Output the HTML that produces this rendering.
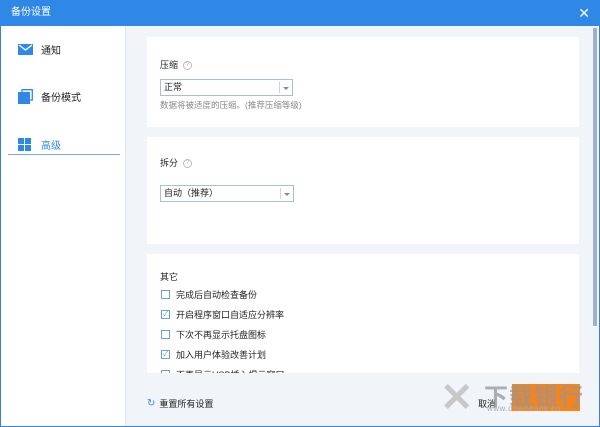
<!DOCTYPE html>
<html><head><meta charset="utf-8"><style>
*{margin:0;padding:0;box-sizing:border-box}
body{width:600px;height:427px;overflow:hidden;font-family:"Liberation Sans","Noto Sans CJK SC",sans-serif;font-size:9px;color:#222;background:#f1f4f9;position:relative}
.title{position:absolute;left:0;top:0;width:600px;height:26px;background:#2f87e6;color:#fff;font-size:10px;line-height:26px;padding-left:11px}
.close{position:absolute;right:10px;top:0;color:#fff;font-size:14px;line-height:26px}
.win{position:absolute;left:0;top:26px;width:600px;height:401px;border:1px solid #3a7fd0;border-top:none}
.side{position:absolute;left:1px;top:26px;width:125px;height:400px;background:#fff;border-right:1px solid #e1e6ee}
.item{position:absolute;left:17px;font-size:10px;display:flex;align-items:center}
.item span{margin-left:8px}
.card{position:absolute;left:147px;width:432px;background:#fff}
.lbl{position:absolute;left:13px;font-size:9px}
.q{display:inline-block;width:9px;height:9px;border:1px solid #bbb;border-radius:50%;font-size:6px;line-height:7px;text-align:center;color:#aaa;margin-left:5px;vertical-align:middle}
.sel{position:absolute;left:13px;width:133px;height:17px;border:1px solid #a9bedb;font-size:9px;line-height:15px;padding-left:3px}
.sel:after{content:"";position:absolute;right:0;top:2px;width:12px;height:11px;border-left:1px solid #c9d4e3}
.sel i{position:absolute;right:3px;top:7px;border:3px solid transparent;border-top:3px solid #889;border-bottom:none}
.cb{position:absolute;left:14px;font-size:9px;display:flex;align-items:center}
.cb b{width:9px;height:9px;border:1px solid #6f9fd8;margin-right:6px;font-size:7px;line-height:7px;color:#4a8ad8;font-weight:normal;text-align:center}
</style></head><body>
<div class="title">备份设置<span class="close">✕</span></div>
<div class="win"></div>
<div class="side">
 <div class="item" style="top:16px"><svg width="15" height="11"><rect width="15" height="11" fill="#2f87e6"/><path d="M1 1l6.5 5 6.5-5" stroke="#fff" stroke-width="1.4" fill="none"/></svg><span>通知</span></div>
 <div class="item" style="top:63px"><svg width="15" height="15"><path d="M4 3V0.7h10.3V11H12" fill="none" stroke="#2f87e6" stroke-width="1.3"/><rect x="0" y="3" width="12" height="12" fill="#2f87e6"/></svg><span style="margin-left:8px">备份模式</span></div>
 <div class="item" style="top:111px;color:#2f87e6"><svg width="13" height="13"><rect width="6" height="6" fill="#2f87e6"/><rect x="7" width="6" height="6" fill="#2f87e6"/><rect y="7" width="6" height="6" fill="#2f87e6"/><rect x="7" y="7" width="6" height="6" fill="#2f87e6"/></svg><span style="margin-left:10px">高级</span></div>
 <div style="position:absolute;left:7px;top:128px;width:112px;height:1px;background:#7aaee6"></div>
</div>
<div class="card" style="top:37px;height:90px">
 <div class="lbl" style="top:21px">压缩<span class="q">?</span></div>
 <div class="sel" style="top:42px">正常<i></i></div>
 <div class="lbl" style="top:62px;color:#888;font-size:8.5px">数据将被适度的压缩。(推荐压缩等级)</div>
</div>
<div class="card" style="top:137px;height:107px">
 <div class="lbl" style="top:19px">拆分<span class="q">?</span></div>
 <div class="sel" style="top:48px;width:134px">自动（推荐）<i></i></div>
</div>
<div class="card" style="top:254px;height:119px;overflow:hidden">
 <div class="lbl" style="top:16px">其它</div>
 <div class="cb" style="top:34px"><b></b>完成后自动检查备份</div>
 <div class="cb" style="top:54px"><b>✓</b>开启程序窗口自适应分辨率</div>
 <div class="cb" style="top:74px"><b></b>下次不再显示托盘图标</div>
 <div class="cb" style="top:94px"><b>✓</b>加入用户体验改善计划</div>
 <div class="cb" style="top:114px"><b></b>不再显示USB插入提示窗口</div>
</div>
<div style="position:absolute;left:593px;top:28px;width:4px;height:298px;background:#9fb1c9"></div>
<div style="position:absolute;left:147px;top:397px;font-size:9px;display:flex;align-items:center"><span style="color:#2f87e6;font-size:10px;margin-right:4px">↻</span>重置所有设置</div>
<div style="position:absolute;left:440px;top:378px;width:50px;height:40px;color:#c8c8c8;font-size:40px;line-height:40px;font-weight:bold">✕</div>
<div style="position:absolute;left:478px;top:397px;font-size:9px">取消</div>
<div style="position:absolute;left:512px;top:384px;width:68px;height:27px;background:#f6841c"></div>
<div style="position:absolute;left:484px;top:377px;font-size:24px;color:rgba(150,150,150,.75);letter-spacing:1px;font-weight:bold">下载银行</div>
<div style="position:absolute;left:487px;top:404px;font-size:8px;color:#aaa;letter-spacing:.5px">www.downbank.cn</div>
</body></html>
